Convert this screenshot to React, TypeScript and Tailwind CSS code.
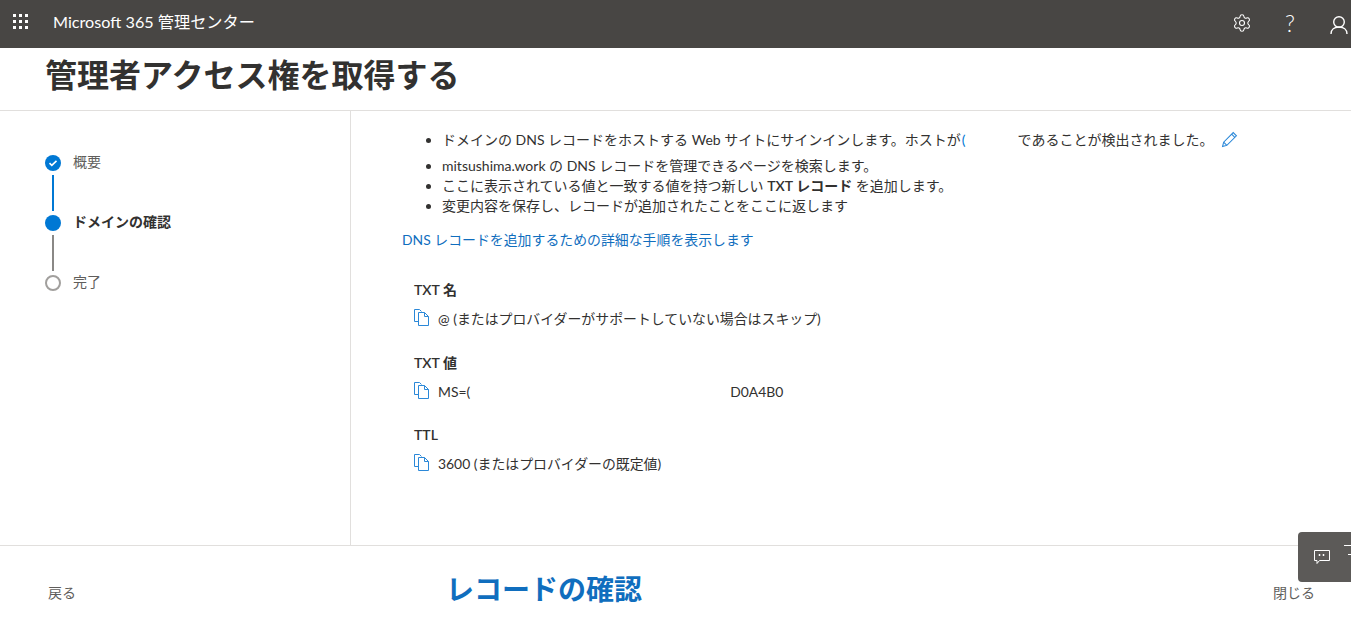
import React from 'react';
import { Settings } from 'lucide-react';

const font = { fontFamily: 'Lato, "Noto Sans CJK JP", sans-serif' };

const CopyIcon = () => (
  <svg width="15" height="17" viewBox="0 0 15 17" fill="none" stroke="#2b88d8" strokeWidth="1" className="shrink-0">
    <path d="M4.5 12.5H.5V.5h5l2 2" />
    <path d="M4.5 3.5h6l4 4v9h-10z" fill="#fff" />
    <path d="M10.5 3.5v4h4" />
  </svg>
);

const Step = ({ label, state }: { label: string; state: 'done' | 'active' | 'todo' }) => (
  <div className="flex items-center h-4">
    {state === 'done' && (
      <div className="w-4 h-4 rounded-full bg-[#0078d4] flex items-center justify-center">
        <svg width="10" height="8" viewBox="0 0 10 8" fill="none" stroke="#fff" strokeWidth="1.6">
          <path d="M1.5 4.2 3.8 6.3 8.5 1.8" />
        </svg>
      </div>
    )}
    {state === 'active' && <div className="w-4 h-4 rounded-full bg-[#0078d4]" />}
    {state === 'todo' && <div className="w-4 h-4 rounded-full border-2 border-[#a19f9d] bg-white" />}
    <span className={`ml-3 -mt-[2px] text-sm ${state === 'active' ? 'font-semibold text-[#323130]' : 'text-[#605e5c]'}`}>{label}</span>
  </div>
);

const Field = ({ label, children }: { label: string; children: React.ReactNode }) => (
  <div className="h-[72.5px]">
    <div className="text-sm font-semibold leading-5 text-[#323130]">{label}</div>
    <div className="mt-[9px] flex items-start gap-[9px] text-[13.9px] leading-5 text-[#323130]">
      <CopyIcon />
      <div>{children}</div>
    </div>
  </div>
);

export default function App() {
  return (
    <div className="h-[631px] w-full overflow-hidden bg-white relative flex flex-col" style={font}>
      {/* Top bar */}
      <div className="h-12 shrink-0 bg-[#484644] flex items-center text-white">
        <div className="w-[53px] pl-[13px] -mt-[5px]">
          <div className="grid grid-cols-3 gap-[3px] w-[15px]">
            {Array.from({ length: 9 }).map((_, i) => (
              <div key={i} className="w-[3px] h-[3px] bg-white" />
            ))}
          </div>
        </div>
        <div className="text-[16.2px] -mt-[3px]">Microsoft 365 管理センター</div>
        <div className="ml-auto flex items-center -mt-[2px]">
          <Settings size={20} strokeWidth={1.3} />
          <div className="ml-[33px] text-[23px] font-light leading-none">?</div>
          <svg width="18" height="20" viewBox="0 0 18 20" fill="none" stroke="#fff" strokeWidth="1.4" className="ml-[35px] mr-[3px] mt-1">
            <circle cx="9" cy="7" r="5.3" />
            <path d="M1 19c0-4.5 3.5-7 8-7s8 2.5 8 7" />
          </svg>
        </div>
      </div>

      {/* Title */}
      <div className="h-[63px] shrink-0 border-b border-[#e1dfdd] pl-[45px]">
        <h1 className="text-[32px] font-semibold leading-[53px] text-[#323130]">管理者アクセス権を取得する</h1>
      </div>

      <div className="h-[435px] shrink-0 flex border-b border-[#e1dfdd]">
        {/* Steps */}
        <div className="w-[351px] shrink-0 border-r border-[#e1dfdd] pl-[45px] pt-[44px]">
          <Step label="概要" state="done" />
          <div className="ml-[7px] my-1 w-[2px] h-9 bg-[#0078d4]" />
          <Step label="ドメインの確認" state="active" />
          <div className="ml-[7px] my-1 w-[2px] h-9 bg-[#8a8886]" />
          <Step label="完了" state="todo" />
        </div>

        {/* Content */}
        <div className="flex-1 pl-[51px] pt-[19px] text-sm leading-5 text-[#323130]">
          <ul className="list-disc pl-10 whitespace-nowrap">
            <li className="h-[26px]">
              <span>ドメインの DNS レコードをホストする Web サイトにサインインします。ホストが</span>
              <span className="ml-[1px] text-[#0078d4]">(</span>
              <span className="inline-block w-[52px]" />
              <span>であることが検出されました。</span>
              <svg width="17" height="17" viewBox="0 0 16 16" fill="none" stroke="#2b88d8" strokeWidth="1" className="inline-block ml-[8px] -mt-1">
                <path d="M1.5 14.5 2.5 10.5 11.5 1.5 14.5 4.5 5.5 13.5zM2.5 10.5 5.5 13.5M10 3l3 3" />
              </svg>
            </li>
            <li>mitsushima.work の DNS レコードを管理できるページを検索します。</li>
            <li>
              ここに表示されている値と一致する値を持つ新しい <b className="font-semibold">TXT レコード</b> を追加します。
            </li>
            <li>変更内容を保存し、レコードが追加されたことをここに返します</li>
          </ul>
          <div className="mt-[14px] text-[13.9px] text-[#106ebe]">DNS レコードを追加するための詳細な手順を表示します</div>
          <div className="mt-[30px] pl-3">
            <Field label="TXT 名">@ (またはプロバイダーがサポートしていない場合はスキップ)</Field>
            <Field label="TXT 値">
              <span>MS=(</span>
              <span className="inline-block w-[260px]" />
              <span>D0A4B0</span>
            </Field>
            <Field label="TTL">3600 (またはプロバイダーの既定値)</Field>
          </div>
        </div>
      </div>

      {/* Footer */}
      <div className="flex-1 flex items-center pl-12 pr-9 text-sm text-[#605e5c]">
        <span className="mt-[8px]">戻る</span>
        <span className="ml-[370px] text-[28px] font-semibold text-[#106ebe]">レコードの確認</span>
        <span className="ml-auto mt-[8px]">閉じる</span>
      </div>

      {/* Feedback button */}
      <div className="absolute right-0 top-[532px] w-[53px] h-[50px] bg-[#5c5a58] rounded-l-sm flex items-center pl-[15px]">
        <svg width="18" height="16" viewBox="0 0 18 16" fill="none" stroke="#fff" strokeWidth="1">
          <path d="M1.5 1.5h15v10H6.5l-2.5 3v-3H1.5z" />
          <path d="M6.5 5v2M10.5 5v2" strokeWidth="1.5" />
        </svg>
        <div className="absolute right-0 top-[13px] w-[7px] h-[1px] bg-white" />
        <div className="absolute right-0 top-[22px] w-[3px] h-[1px] bg-white" />
      </div>
    </div>
  );
}
